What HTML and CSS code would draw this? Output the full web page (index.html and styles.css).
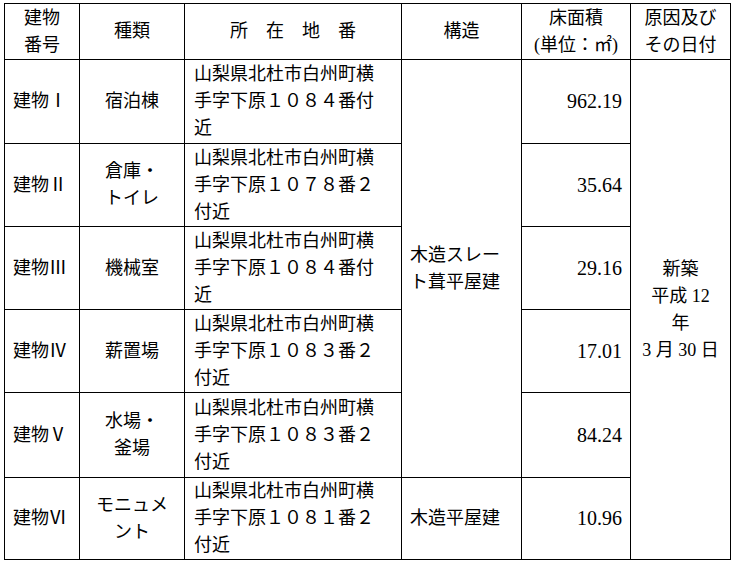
FILE: index.html
```html
<!DOCTYPE html>
<html lang="ja">
<head>
<meta charset="utf-8">
<title>建物一覧</title>
<link rel="stylesheet" href="styles.css">
</head>
<body>
<table class="grid">
  <colgroup>
    <col class="c-no">
    <col class="c-kind">
    <col class="c-addr">
    <col class="c-struct">
    <col class="c-area">
    <col class="c-date">
  </colgroup>
  <thead>
    <tr class="head">
      <th>建物<br>番号</th>
      <th>種類</th>
      <th>所　在　地　番</th>
      <th>構造</th>
      <th>床面積<br>(単位：㎡)</th>
      <th>原因及び<br>その日付</th>
    </tr>
  </thead>
  <tbody>
    <tr class="row r1">
      <td class="no">建物Ⅰ</td>
      <td class="kind">宿泊棟</td>
      <td class="addr">山梨県北杜市白州町横<br>手字下原１０８４番付<br>近</td>
      <td class="struct" rowspan="5">木造スレー<br>ト葺平屋建</td>
      <td class="area">962.19</td>
      <td class="date" rowspan="6">新築<br>平成 12<br>年<br>3 月 30 日</td>
    </tr>
    <tr class="row">
      <td class="no">建物Ⅱ</td>
      <td class="kind">倉庫・<br>トイレ</td>
      <td class="addr">山梨県北杜市白州町横<br>手字下原１０７８番２<br>付近</td>
      <td class="area">35.64</td>
    </tr>
    <tr class="row">
      <td class="no">建物Ⅲ</td>
      <td class="kind">機械室</td>
      <td class="addr">山梨県北杜市白州町横<br>手字下原１０８４番付<br>近</td>
      <td class="area">29.16</td>
    </tr>
    <tr class="row">
      <td class="no">建物Ⅳ</td>
      <td class="kind">薪置場</td>
      <td class="addr">山梨県北杜市白州町横<br>手字下原１０８３番２<br>付近</td>
      <td class="area">17.01</td>
    </tr>
    <tr class="row r5">
      <td class="no">建物Ⅴ</td>
      <td class="kind">水場・<br>釜場</td>
      <td class="addr">山梨県北杜市白州町横<br>手字下原１０８３番２<br>付近</td>
      <td class="area">84.24</td>
    </tr>
    <tr class="row r6">
      <td class="no">建物Ⅵ</td>
      <td class="kind">モニュメ<br>ント</td>
      <td class="addr">山梨県北杜市白州町横<br>手字下原１０８１番２<br>付近</td>
      <td class="struct">木造平屋建</td>
      <td class="area">10.96</td>
    </tr>
  </tbody>
</table>
</body>
</html>
```
FILE: styles.css
```css
html, body {
  background: #fff;
}
body {
  margin: 0;
  padding: 3px 4px;
  color: #000;
  font-family: "Liberation Serif", "Noto Sans CJK JP", serif;
  font-size: 18px;
  line-height: 27px;
}
.grid {
  border-collapse: collapse;
  table-layout: fixed;
  width: 726px;
}
.c-no { width: 75px; }
.c-kind { width: 105px; }
.c-addr { width: 217px; }
.c-struct { width: 120px; }
.c-area { width: 109px; }
.c-date { width: 100px; }

.grid th,
.grid td {
  border: 1px solid #000;
  padding: 0;
  vertical-align: middle;
  font-weight: normal;
}
.head th {
  height: 55px;
  text-align: center;
}
.row td {
  height: 82px;
}
.r1 td {
  height: 83px;
}
.r5 td {
  height: 84px;
}
.r6 td {
  height: 81px;
}
.no {
  text-align: left;
  padding-left: 8px !important;
}
.kind {
  text-align: center;
}
.addr {
  text-align: left;
  padding-left: 9px !important;
}
.struct {
  text-align: left;
  padding-left: 8px !important;
}
.area {
  text-align: right;
  padding-right: 8px !important;
  font-size: 20px;
}
.date {
  text-align: center;
}
```
